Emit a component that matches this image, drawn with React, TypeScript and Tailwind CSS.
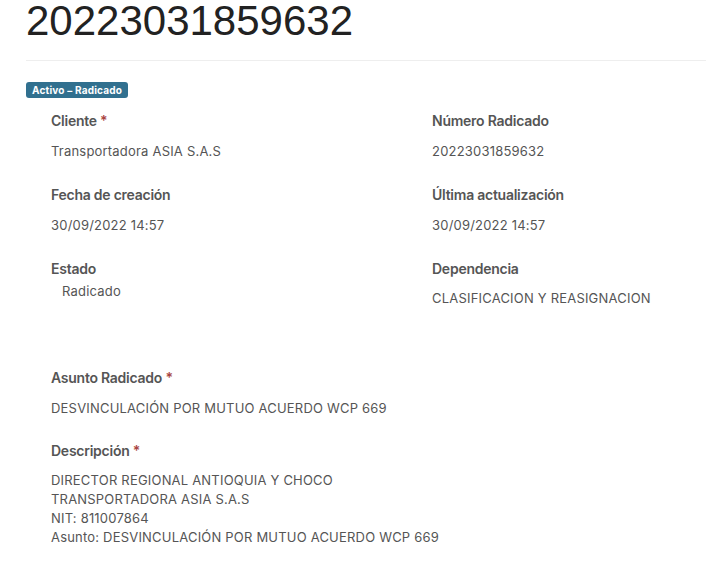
import React from "react";

const Label = ({ text, req, className = "" }: { text: string; req?: boolean; className?: string }) => (
  <div className={"h-5 text-[14px] leading-5 font-semibold tracking-[-0.25px] text-[#555] " + className}>
    {text}
    {req && <span className="text-[#a94442]"> *</span>}
  </div>
);

const Value = ({ children, className = "" }: { children: React.ReactNode; className?: string }) => (
  <div className={"text-[13px] leading-[19px] tracking-[0.2px] text-[#555] " + className}>{children}</div>
);

export default function App() {
  return (
    <div className="w-[706px] h-[575px] overflow-hidden bg-white" style={{ fontFamily: "Inter, 'Open Sans', sans-serif" }}>
      <div className="pl-[26px]">
        <h1 className="text-[42px] leading-none text-[#222] m-0" style={{ fontFamily: "'Liberation Sans', Arial, sans-serif" }}>
          20223031859632
        </h1>
        <div className="mt-[18px] h-px bg-[#eeeeee]" />
        <div className="mt-[21px] inline-flex h-4 items-center rounded-[3px] bg-[#31708f] px-[6px] text-[10px] font-bold tracking-[0.2px] text-white">
          Activo – Radicado
        </div>
        <div className="pl-[25px] pt-[11px]">
          <div className="grid grid-cols-[381px_1fr]">
            <div className="mb-6">
              <Label text="Cliente" req />
              <Value className="mt-[11px]">Transportadora ASIA S.A.S</Value>
            </div>
            <div className="mb-6">
              <Label text="Número Radicado" />
              <Value className="mt-[11px]">20223031859632</Value>
            </div>
            <div className="mb-6">
              <Label text="Fecha de creación" />
              <Value className="mt-[11px]">30/09/2022 14:57</Value>
            </div>
            <div className="mb-6">
              <Label text="Última actualización" />
              <Value className="mt-[11px]">30/09/2022 14:57</Value>
            </div>
            <div>
              <Label text="Estado" />
              <Value className="mt-[3px] pl-[11px]">Radicado</Value>
            </div>
            <div>
              <Label text="Dependencia" />
              <Value className="mt-[10px]">CLASIFICACION Y REASIGNACION</Value>
            </div>
          </div>
          <div className="mt-[60px]">
            <Label text="Asunto Radicado" req />
            <Value className="mt-[11px]">DESVINCULACIÓN POR MUTUO ACUERDO WCP 669</Value>
          </div>
          <div className="mt-[23px]">
            <Label text="Descripción" req />
            <Value className="mt-[10px]">
              <div>DIRECTOR REGIONAL ANTIOQUIA Y CHOCO</div>
              <div>TRANSPORTADORA ASIA S.A.S</div>
              <div>NIT: 811007864</div>
              <div>Asunto: DESVINCULACIÓN POR MUTUO ACUERDO WCP 669</div>
            </Value>
          </div>
        </div>
      </div>
    </div>
  );
}
